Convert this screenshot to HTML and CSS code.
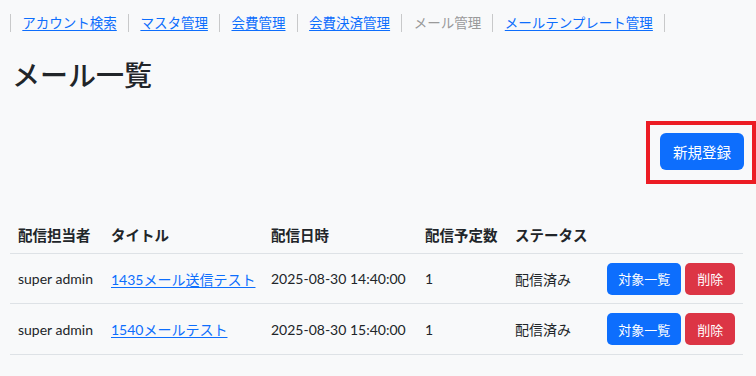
FILE: index.html
```html
<!DOCTYPE html>
<html lang="ja">
<head>
<meta charset="utf-8">
<link rel="stylesheet" href="styles.css">
</head>
<body>
<div class="page">
  <nav class="crumbs">
    <a class="crumb" href="#">アカウント検索</a>
    <a class="crumb" href="#">マスタ管理</a>
    <a class="crumb" href="#">会費管理</a>
    <a class="crumb" href="#">会費決済管理</a>
    <span class="crumb current">メール管理</span>
    <a class="crumb" href="#">メールテンプレート管理</a>
    <span class="crumb end"></span>
  </nav>
  <h1 class="title">メール一覧</h1>
  <div class="actions">
    <button class="btn btn-primary btn-new">新規登録</button>
    <span class="highlight"></span>
  </div>
  <table class="list">
    <colgroup>
      <col style="width:93px"><col style="width:160px"><col style="width:154px"><col style="width:90px"><col style="width:92px"><col>
    </colgroup>
    <thead>
      <tr><th>配信担当者</th><th>タイトル</th><th>配信日時</th><th>配信予定数</th><th>ステータス</th><th></th></tr>
    </thead>
    <tbody>
      <tr>
        <td>super admin</td>
        <td><a href="#">1435メール送信テスト</a></td>
        <td>2025-08-30 14:40:00</td>
        <td>1</td>
        <td>配信済み</td>
        <td><div class="ops"><button class="btn btn-primary">対象一覧</button><button class="btn btn-danger">削除</button></div></td>
      </tr>
      <tr>
        <td>super admin</td>
        <td><a href="#">1540メールテスト</a></td>
        <td>2025-08-30 15:40:00</td>
        <td>1</td>
        <td>配信済み</td>
        <td><div class="ops"><button class="btn btn-primary">対象一覧</button><button class="btn btn-danger">削除</button></div></td>
      </tr>
    </tbody>
  </table>
</div>
</body>
</html>
```
FILE: styles.css
```css
* { box-sizing: border-box; }
html, body { margin: 0; padding: 0; }
body {
  background: #f8f9fa;
  color: #212529;
  font-family: Lato, "Noto Sans CJK JP", sans-serif;
  font-size: 14px;
}
.page { padding: 0 12px 0 10px; }
.crumbs {
  display: flex;
  align-items: center;
  padding-top: 13px;
  height: 32px;
}
.crumb {
  border-left: 1px solid #c8c9ca;
  padding: 0 11.3px;
  font-size: 13.5px;
  line-height: 18px;
  color: #0d6efd;
  text-decoration: underline;
  text-underline-offset: 2px;
}
.crumb.current { color: #9a9a9a; text-decoration: none; }
.crumb.end { padding: 0; height: 18px; }
.title {
  margin: 24px 0 0 2px;
  font-size: 28px;
  font-weight: 500;
  line-height: 38px;
}
.actions {
  position: relative;
  display: flex;
  justify-content: flex-end;
  margin-top: 39px;
}
.highlight {
  position: absolute;
  right: -12px;
  top: -12px;
  width: 110px;
  height: 63px;
  border: 4px solid #ec1c24;
}
.btn {
  border: none;
  border-radius: 5px;
  color: #fff;
  font-family: inherit;
  font-size: 13px;
  cursor: pointer;
}
.btn-primary { background: #0d6efd; }
.btn-danger { background: #dc3545; }
.btn-new {
  width: 84px;
  height: 37px;
  font-size: 14.5px;
  border-radius: 6px;
}
.list {
  width: 733px;
  margin-top: 46px;
  border-collapse: collapse;
  table-layout: fixed;
}
.list th {
  text-align: left;
  font-weight: 700;
  font-size: 14.5px;
  padding: 8px 8px;
  height: 37px;
  border-bottom: 1px solid #dee2e6;
}
.list td {
  padding: 0 8px;
  height: 50px;
  border-bottom: 1px solid #dee2e6;
  white-space: nowrap;
}
.list tbody tr:last-child td { height: 51px; }
.list td a { color: #0d6efd; text-decoration: underline; text-underline-offset: 2px; }
.ops { display: flex; gap: 4px; }
.ops .btn { height: 32px; }
.ops .btn-primary { width: 75px; }
.ops .btn-danger { width: 50px; }
```
